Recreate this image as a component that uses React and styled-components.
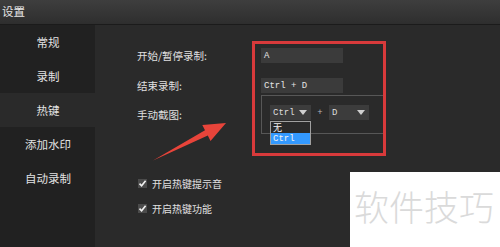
import React from 'react'
import styled, { createGlobalStyle } from 'styled-components'

const GlobalStyle = createGlobalStyle`
  html, body {
    margin: 0;
    padding: 0;
    background: #2a2a2a;
    overflow: hidden;
  }
  * {
    box-sizing: border-box;
  }
`

const CJK = `"Noto Sans CJK SC", "Noto Sans", sans-serif`
const MONO = `"Liberation Mono", "DejaVu Sans Mono", monospace`

const navItems = ['常规', '录制', '热键', '添加水印', '自动录制']

const App = () => {
  return (
    <>
      <GlobalStyle />
      <Window>
        <TitleBar>设置</TitleBar>
        <Body>
          <Sidebar>
            {navItems.map((item) => (
              <NavItem key={item} $active={item === '热键'}>
                {item}
              </NavItem>
            ))}
          </Sidebar>
          <Content>
            <Row $top={0}>
              <Label>开始/暂停录制:</Label>
              <KeyInput>A</KeyInput>
            </Row>
            <Row $top={15}>
              <Label>结束录制:</Label>
              <KeyInput>Ctrl + D</KeyInput>
            </Row>
            <Row $top={2}>
              <Label>手动截图:</Label>
              <GroupBox>
                <Select $width={41}>
                  Ctrl
                  <Caret />
                </Select>
                <Plus>+</Plus>
                <Select $width={40}>
                  D
                  <Caret />
                </Select>
                <DropList>
                  <DropItem $cjk>无</DropItem>
                  <DropItem $selected>Ctrl</DropItem>
                </DropList>
              </GroupBox>
            </Row>
            <CheckRow $top={41}>
              <CheckBox>
                <svg width="9" height="9" viewBox="0 0 9 9">
                  <path d="M1.5 4.6 L3.6 6.8 L7.6 1.8" fill="none" stroke="#f2f2f2" strokeWidth="1.6" />
                </svg>
              </CheckBox>
              <CheckText>开启热键提示音</CheckText>
            </CheckRow>
            <CheckRow $top={9}>
              <CheckBox>
                <svg width="9" height="9" viewBox="0 0 9 9">
                  <path d="M1.5 4.6 L3.6 6.8 L7.6 1.8" fill="none" stroke="#f2f2f2" strokeWidth="1.6" />
                </svg>
              </CheckBox>
              <CheckText>开启热键功能</CheckText>
            </CheckRow>
          </Content>
        </Body>

        {/* annotation overlays */}
        <Highlight />
        <Arrow width="80" height="43" viewBox="0 0 80 43">
          <polygon
            points="3,40.5 55,10.2 52.3,4.9 76,3 60.5,20.9 57.8,15.6"
            fill="#e8443a"
          />
        </Arrow>
        <Watermark>软件技巧</Watermark>
      </Window>
    </>
  )
}

const Window = styled.div`
  position: relative;
  width: 500px;
  height: 247px;
  display: flex;
  flex-direction: column;
  background: #2a2a2a;
  font-family: ${CJK};
  overflow: hidden;
`

const TitleBar = styled.div`
  height: 25px;
  flex-shrink: 0;
  display: flex;
  align-items: center;
  padding: 0 0 2px 2px;
  background: linear-gradient(#3e3e3e, #2e2e2e);
  border-bottom: 1px solid #1b1b1b;
  color: #e8e8e8;
  font-size: 11.5px;
`

const Body = styled.div`
  flex: 1;
  display: flex;
`

const Sidebar = styled.div`
  width: 95px;
  flex-shrink: 0;
  display: flex;
  flex-direction: column;
  background: #212121;
`

const NavItem = styled.div`
  height: 34px;
  display: flex;
  align-items: center;
  justify-content: center;
  padding-left: 1px;
  font-size: 11.5px;
  color: #e2e2e2;
  background: ${({ $active }) => ($active ? '#2a2a2a' : 'transparent')};
`

const Content = styled.div`
  flex: 1;
  display: flex;
  flex-direction: column;
  padding: 23px 0 0 42px;
`

const Row = styled.div`
  display: flex;
  align-items: center;
  margin-top: ${({ $top }) => $top}px;
`

const Label = styled.div`
  width: 124px;
  font-size: 10.5px;
  color: #e0e0e0;
`

const KeyInput = styled.div`
  width: 82px;
  height: 15px;
  display: flex;
  align-items: center;
  padding-left: 3px;
  background: #3b3b3b;
  font-family: ${MONO};
  font-size: 9px;
  color: #e4e4e4;
`

const GroupBox = styled.div`
  position: relative;
  width: 123px;
  height: 39px;
  display: flex;
  align-items: flex-start;
  padding: 9px 0 0 8px;
  border: 1px solid #575757;
`

const Select = styled.div`
  width: ${({ $width }) => $width}px;
  height: 15px;
  display: flex;
  align-items: center;
  justify-content: space-between;
  padding: 0 4px 0 3px;
  background: #3c3c3c;
  font-family: ${MONO};
  font-size: 9px;
  color: #dedede;
`

const Caret = styled.span`
  width: 0;
  height: 0;
  border-left: 4px solid transparent;
  border-right: 4px solid transparent;
  border-top: 5px solid #cfcfcf;
`

const Plus = styled.div`
  width: 18px;
  height: 15px;
  display: flex;
  align-items: center;
  justify-content: center;
  font-family: ${MONO};
  font-size: 9px;
  color: #b8b8b8;
`

const DropList = styled.div`
  position: absolute;
  top: 25px;
  left: 8px;
  width: 41px;
  display: flex;
  flex-direction: column;
  border: 1px solid #a0a0a0;
  background: #2a2a2a;
`

const DropItem = styled.div`
  height: 11px;
  display: flex;
  align-items: center;
  padding-left: 2px;
  line-height: 10px;
  overflow: hidden;
  font-family: ${({ $cjk }) => ($cjk ? CJK : MONO)};
  font-size: 9px;
  color: #f2f2f2;
  background: ${({ $selected }) => ($selected ? '#3399ff' : 'transparent')};
`

const CheckRow = styled.div`
  height: 16px;
  display: flex;
  align-items: center;
  margin: ${({ $top }) => $top}px 0 0 1px;
`

const CheckBox = styled.span`
  width: 9px;
  height: 9px;
  display: flex;
  background: #4b4b4b;
`

const CheckText = styled.span`
  margin-left: 5px;
  font-size: 10px;
  color: #e0e0e0;
`

const Highlight = styled.div`
  position: absolute;
  left: 252px;
  top: 41px;
  width: 134px;
  height: 115px;
  border: 3px solid #d83a3b;
  pointer-events: none;
`

const Arrow = styled.svg`
  position: absolute;
  left: 150px;
  top: 120px;
  pointer-events: none;
`

const Watermark = styled.div`
  position: absolute;
  left: 350px;
  top: 172px;
  right: 0;
  bottom: 0;
  padding: 16px 0 0 4px;
  background: #ffffff;
  font-family: ${CJK};
  font-size: 35px;
  font-weight: 300;
  line-height: 1;
  color: #dadada;
  white-space: nowrap;
`

export default App
